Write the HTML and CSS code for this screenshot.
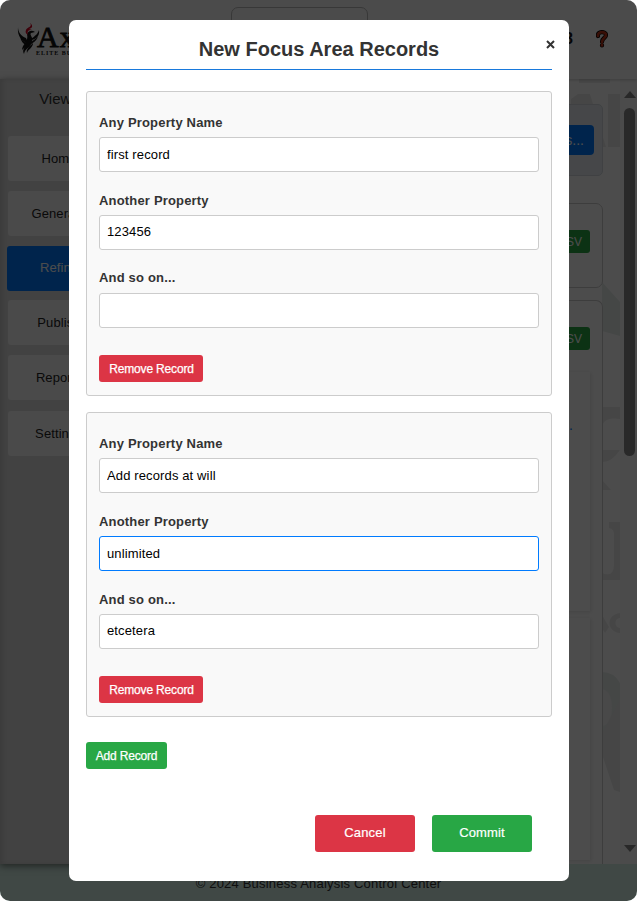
FILE: index.html
```html
<!DOCTYPE html>
<html lang="en">
<head>
<meta charset="utf-8">
<title>Business Analysis Control Center</title>
<link rel="stylesheet" href="styles.css">
</head>
<body>
<div class="app">
  <header class="header">
    <div class="logo">
      <svg class="phoenix" viewBox="0 0 24 34" width="24" height="34">
        <path d="M1 5C1 10 4 14 9 16L11 21C5 20 0 14 1 5ZM3 15C5 19 8 20 11 22L10 24C6 22 4 19 3 15ZM22 8C23 14 19 17 15 18L13 21C13 15 20 15 22 8ZM21 15C19 19 17 20 13 23L14 20ZM10 12C12 8 15 8 18 10L14 11C12 13 17 16 15 19C14 23 8 24 5 28C5 22 12 20 10 12ZM15 20C14 25 8 26 7 32C4 26 10 24 15 20ZM16 21C16 26 11 27 10 31C9 27 12 25 16 21Z" fill="#111"/>
        <path d="M13 1C16 5 10 5 9 8C8 10 9 12 11 13C10 9 11 8 15 8L12 7C16 6 16 3 13 1Z" fill="#d00020"/>
      </svg>
      <div class="wordmark"><span class="brand">Axion</span><span class="tagline">ELITE BUSINESS</span></div>
    </div>
    <div class="search"></div>
    <div class="tools">
      <span class="gear">8</span>
      <svg width="12" height="18" viewBox="0 0 12 18"><path d="M2 6C1 1 10 1 10 5C10 8 6 8 6 12M6 15V15.4" fill="none" stroke="#000" stroke-width="4.2" stroke-linecap="round"/><path d="M2 6C1 1 10 1 10 5C10 8 6 8 6 12M6 15V15.4" fill="none" stroke="#bd3218" stroke-width="2.8" stroke-linecap="round"/></svg>
    </div>
  </header>
  <div class="body">
    <nav class="sidebar">
      <h3 class="nav-title">Views</h3>
      <a class="nav-item">Home</a>
      <a class="nav-item">Generate</a>
      <a class="nav-item active">Refine</a>
      <a class="nav-item">Publish</a>
      <a class="nav-item">Reports</a>
      <a class="nav-item">Settings</a>
    </nav>
    <main class="main">
      <svg class="watermark" width="54" height="785" viewBox="0 0 54 785">
        <g fill="#ececec">
          <path d="M13 0H44V4H13ZM12 15H24L40 68H30L24 52H5V20ZM42 15H54V68H42Z"/>
          <path d="M36 328H54V340Q36 337 36 350ZM36 371H54Q45 384 36 383ZM36 401L45 411H36ZM43 443H54V501H36V494Q48 499 48 485V455Q48 450 43 449Z"/>
          <path d="M36 536L43 548L39 554L36 549ZM54 534C39 536 41 553 54 554V549C48 549 48 539 54 539Z"/>
        </g>
        <g fill="#e8eeec"><path d="M36 203L54 223V257L36 252ZM36 593Q48 593 54 604V690L36 665Z"/></g>
        <path d="M36 610Q46 612 46 629Q46 646 36 647Z" fill="#f3f3f3"/>
        <path d="M36 675L48 711L54 713V620L36 655Z" fill="#e9ebea"/>
      </svg>
      <section class="toolbar"><button class="btn-open">Records...</button></section>
      <section class="panel short"><button class="btn-csv">CSV</button></section>
      <section class="panel tall">
        <button class="btn-csv">CSV</button>
        <div class="sheet first"><a class="link">field.</a></div>
        <div class="sheet second"></div>
      </section>
    </main>
    <div class="scrollbar"><i class="up"></i><i class="thumb"></i><i class="down"></i></div>
  </div>
  <footer class="footer">© 2024 Business Analysis Control Center</footer>
</div>

<div class="overlay">
  <div class="modal">
    <button class="close" aria-label="Close"><svg width="9" height="9" viewBox="0 0 9 9"><path d="M1 1L8 8M8 1L1 8" stroke="#333" stroke-width="2"/></svg></button>
    <h2 class="title">New Focus Area Records</h2>
    <div class="record">
      <label class="label">Any Property Name</label>
      <input class="input" value="first record">
      <label class="label">Another Property</label>
      <input class="input raised" value="123456">
      <label class="label lifted">And so on...</label>
      <input class="input" value="">
      <button class="btn small red">Remove Record</button>
    </div>
    <div class="record">
      <label class="label">Any Property Name</label>
      <input class="input" value="Add records at will">
      <label class="label">Another Property</label>
      <input class="input focused" value="unlimited">
      <label class="label">And so on...</label>
      <input class="input raised" value="etcetera">
      <button class="btn small red">Remove Record</button>
    </div>
    <button class="btn small green add">Add Record</button>
    <div class="actions">
      <button class="btn large red">Cancel</button>
      <button class="btn large green">Commit</button>
    </div>
  </div>
</div>
</body>
</html>
```
FILE: styles.css
```css
* { box-sizing: border-box; }
html { background: #fff; }
body { margin: 0; width: 637px; height: 901px; overflow: hidden; position: relative; font-family: "Liberation Sans", Arial, sans-serif; font-size: 13px; color: #333; }
button, input { font-family: inherit; margin: 0; }
h2, h3 { margin: 0; }

/* Page behind the dialog */
.app { height: 901px; display: flex; flex-direction: column; border-radius: 10px; overflow: hidden; background: #fff; isolation: isolate; }
.header { height: 79px; flex: none; display: grid; grid-template-columns: 231px 137px 1fr; background: #fafafa; box-shadow: 0 1px 3px rgba(0,0,0,.2); z-index: 1; }
.logo { display: flex; padding: 22px 0 0 17px; }
.phoenix { flex: none; }
.wordmark { display: flex; flex-direction: column; margin-left: -5px; font-family: "Liberation Serif", serif; color: #111; }
.brand { font-size: 30px; line-height: 26px; height: 28px; margin-left: 1px; padding-top: 2px; letter-spacing: 1px; -webkit-text-stroke: .8px #111; }
.tagline { font-size: 6px; line-height: 6px; letter-spacing: 1px; font-weight: bold; white-space: nowrap; }
.search { margin-top: 7px; height: 34px; border: 1px solid #bbb; border-radius: 7px; }
.tools { display: flex; justify-content: flex-end; gap: 23px; padding: 30px 29px 0 0; }
.gear { font-size: 16px; line-height: 17px; font-weight: bold; color: #111; }
.body { height: 785px; flex: none; display: flex; }
.sidebar { width: 120px; flex: none; padding: 0 8px; background: #dcdcdc; display: flex; flex-direction: column; box-shadow: inset 3px 0 4px rgba(0,0,0,.1), 0 2px 7px rgba(0,0,0,.5); z-index: 1; }
.nav-title { height: 57px; line-height: 40px; font-size: 15px; font-weight: normal; text-align: center; letter-spacing: 0; margin-left: -2px; }
.nav-item { height: 45px; margin-bottom: 10px; line-height: 45px; text-align: center; padding-right: 2px; background: #f8f8f8; border-radius: 3px; flex: none; letter-spacing: .1px; color: #222; }
.active { margin-left: -1px; margin-bottom: 9px; line-height: 44px; padding-right: 1px; background: #007bff; color: #fff; }
.nav-item:last-child { margin-top: 1px; }
.main { flex: 1; position: relative; padding: 25px 17px 0 0; overflow: hidden; }
.watermark { position: absolute; right: 0; top: 0; }
.toolbar, .panel { position: relative; }
.toolbar { height: 72px; border: 1px solid #d5dbe0; border-radius: 5px; background: #e9eef4; display: flex; justify-content: flex-end; padding: 20px 8px; }
.btn-open { border: 0; border-radius: 4px; background: #007bff; color: #fff; padding: 0 10px; font-size: 14px; }
.panel { border: 1px solid #ccc; border-radius: 7px; background: #fff; padding: 26px 12px 0; display: flex; flex-direction: column; align-items: flex-end; }
.short { height: 85px; margin-top: 27px; }
.tall { height: 585px; margin-top: 12px; border-bottom: 0; border-bottom-right-radius: 0; }
.btn-csv { height: 23px; flex: none; border: 0; border-radius: 3px; padding: 0 8px; font-size: 12px; color: #fff; background: #28a745; }
.sheet { width: 100%; flex: none; box-shadow: 1px 1px 4px rgba(0,0,0,.12); }
.first { height: 239px; margin-top: 22px; padding: 45px 17px; text-align: right; }
.second { height: 242px; margin-top: 7px; }
.link { color: #007bff; font-size: 14px; }
.scrollbar { width: 17px; padding: 12px 1px 12px 3px; display: flex; flex-direction: column; align-items: center; background: #fafafa; }
.up, .down { border: 6px solid transparent; }
.up { border-top: 0; border-bottom: 7px solid #888; }
.down { border-bottom: 0; border-top: 7px solid #888; margin-top: auto; }
.thumb { width: 11px; height: 348px; margin-top: 10px; border-radius: 6px; background: #8a8a8a; }
.footer { height: 37px; flex: none; background: #d5f0e6; text-align: center; line-height: 39px; font-size: 13px; letter-spacing: .2px; }

/* Dialog */
.overlay { position: absolute; inset: 0; z-index: 5; padding: 20px 68px 20px 69px; background: rgba(0,0,0,.7); border-radius: 10px; }
.modal { position: relative; height: 861px; padding: 0 17px; border-radius: 7px; background: #fff; display: flex; flex-direction: column; }
.close { position: absolute; right: 14px; top: 20px; padding: 0; border: 0; background: none; line-height: 0; }
.title { height: 50px; flex: none; line-height: 58px; margin-bottom: 21px; border-bottom: 1px solid #1879dc; text-align: center; font-size: 20px; }
.record { height: 305px; flex: none; margin-bottom: 16px; padding: 22px 12px 0; border: 1px solid #ccc; border-radius: 3px; background: #f9f9f9; }
.label { display: block; height: 23px; line-height: 17px; font-weight: bold; letter-spacing: .18px; }
.lifted { line-height: 15px; }
.input { display: block; width: 100%; height: 35px; margin-bottom: 20px; padding: 0 7px; border: 1px solid #ccc; border-radius: 3px; background: #fff; font-size: 13px; letter-spacing: .13px; color: #000; outline: none; }
.raised { padding-bottom: 2px; }
.focused { border-color: #007bff; }
.btn { border: 0; border-radius: 3px; color: #fff; padding: 0; }
.small { height: 27px; width: 104px; padding-left: 1px; font-size: 12px; letter-spacing: -.17px; -webkit-text-stroke: .25px #fff; margin-top: 7px; }
.add { width: 81px; flex: none; padding-left: 0; margin-top: 9px; }
.large { width: 100px; height: 37px; padding-bottom: 2px; font-size: 13px; letter-spacing: .15px; -webkit-text-stroke: .2px #fff; }
.red { background: #dc3545; }
.green { background: #28a745; }
.actions { display: flex; justify-content: flex-end; gap: 17px; padding-right: 20px; margin-top: 46px; }
```
